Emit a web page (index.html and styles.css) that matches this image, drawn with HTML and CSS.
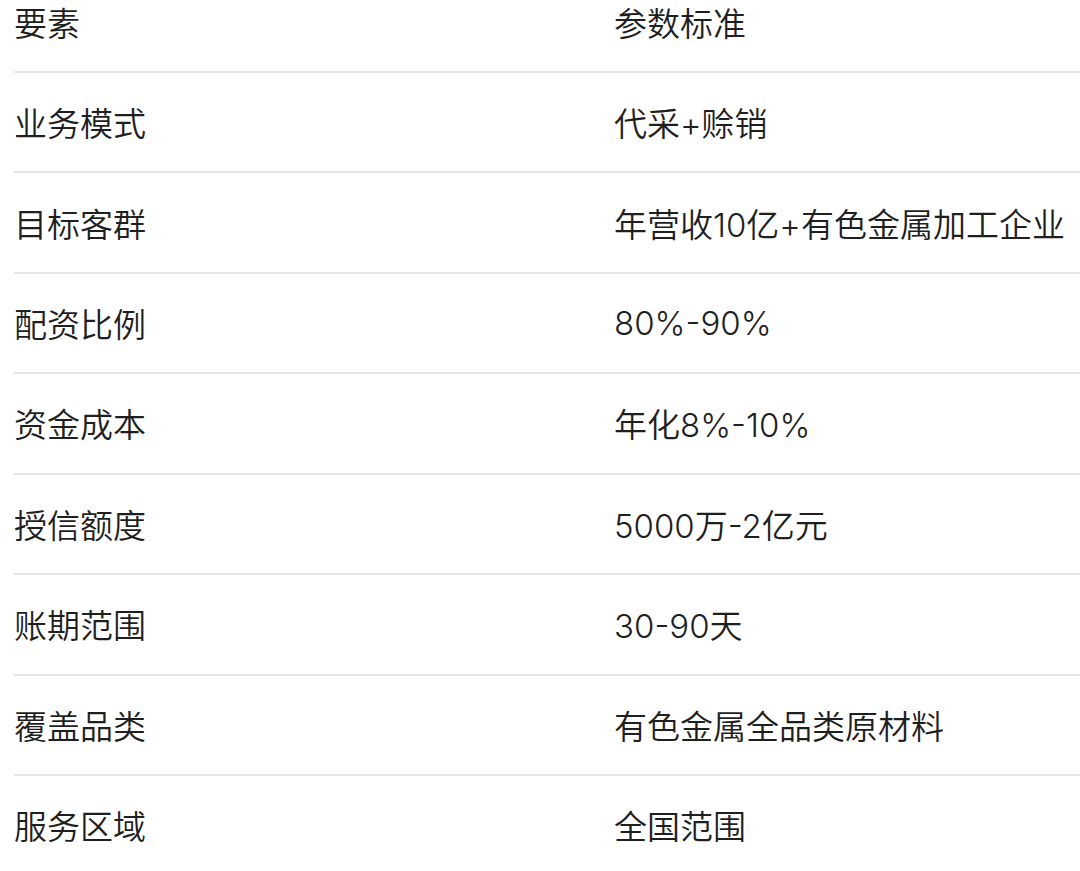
FILE: index.html
```html
<!DOCTYPE html>
<html lang="zh-CN">
<head>
<meta charset="utf-8">
<title>要素</title>
<link rel="stylesheet" href="styles.css">
</head>
<body>
<div class="viewport">
  <div class="table">
    <div class="row"><div class="cell key">要素</div><div class="cell val">参数标准</div></div>
    <div class="row"><div class="cell key">业务模式</div><div class="cell val">代采+赊销</div></div>
    <div class="row"><div class="cell key">目标客群</div><div class="cell val">年营收10亿+有色金属加工企业</div></div>
    <div class="row"><div class="cell key">配资比例</div><div class="cell val">80%-90%</div></div>
    <div class="row"><div class="cell key">资金成本</div><div class="cell val">年化8%-10%</div></div>
    <div class="row"><div class="cell key">授信额度</div><div class="cell val">5000万-2亿元</div></div>
    <div class="row"><div class="cell key">账期范围</div><div class="cell val">30-90天</div></div>
    <div class="row"><div class="cell key">覆盖品类</div><div class="cell val">有色金属全品类原材料</div></div>
    <div class="row"><div class="cell key">服务区域</div><div class="cell val">全国范围</div></div>
  </div>
</div>
</body>
</html>
```
FILE: styles.css
```css
html, body {
  margin: 0;
  padding: 0;
  background: #ffffff;
}
.viewport {
  width: 1080px;
  height: 871px;
  overflow: hidden;
}
.table {
  margin-top: -27.43px;
  margin-left: 14px;
  width: 1100px;
  font-family: "Inter", "Noto Sans CJK SC", sans-serif;
  font-size: 33px;
  font-weight: 350;
  color: #1f1f1f;
}
.row {
  display: flex;
  align-items: center;
  height: 100.43px;
  box-sizing: border-box;
  border-bottom: 2px solid #e6e6e6;
}
.cell.key {
  width: 600px;
  flex: none;
}
.cell.val {
  flex: 1;
}
```
